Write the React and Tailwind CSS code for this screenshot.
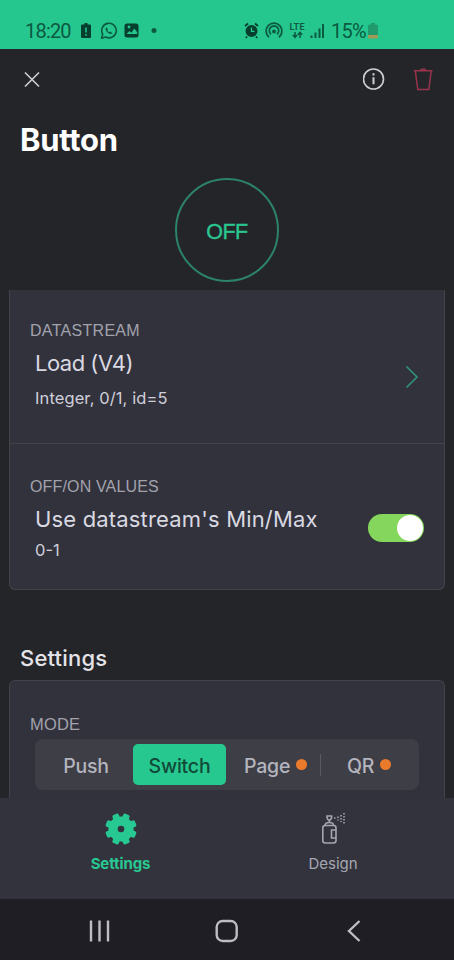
import { useState } from "react";

const modes = [
  { name: "Push", box: "w-[98px] pl-[4px] justify-center", pro: false },
  { name: "Switch", box: "w-[93px] justify-center", pro: false },
  { name: "Page", box: "w-[94px] pl-[18px]", pro: true },
  { name: "QR", box: "w-[98px] pl-[26px]", pro: true },
];

function StatusBar() {
  return (
    <div className="h-[49px] shrink-0 bg-[#25c78f] text-[#0b5a41] flex items-center pt-[12px] pl-[25px] font-[Roboto]">
      <span className="w-[56px] text-[20px] leading-6 tracking-[-0.8px]">18:20</span>
      <svg width="78" height="18" viewBox="0 0 78 18" fill="none">
        {/* battery */}
        <path d="M3.500 1h3v1.500H9a1 1 0 0 1 1 1V15a1 1 0 0 1-1 1H1a1 1 0 0 1-1-1V3.500a1 1 0 0 1 1-1h2.500z" fill="#063f2d" />
        <path d="M5 5.500v5M5 12v1.800" stroke="#25c78f" strokeWidth="1.500" />
        {/* whatsapp */}
        <path d="M20.600 16.200l1.100-4A7.300 7.300 0 1 1 24.600 15z" stroke="#0b5a41" strokeWidth="1.600" strokeLinejoin="round" />
        <path d="M25.300 5.300c-1.500 1.400-.5 3.400 1 4.900s3.600 2.500 5 .9l-1.900-1.500-1.100.7c-.9-.4-1.600-1.200-1.900-2l.6-1z" fill="#0b5a41" />
        {/* gallery */}
        <rect x="43.500" y="1.500" width="14" height="14" rx="2.500" fill="#063f2d" />
        <path d="M45.500 12l3-3 2 1.800 2.700-4.200 3 3.600V12z" fill="#25c78f" />
        <circle cx="48" cy="5" r="1.400" fill="#25c78f" />
        <circle cx="73" cy="8.500" r="2.500" fill="#0b5a41" />
      </svg>
      <div className="flex items-center ml-[85px]">
        <svg width="84" height="18" viewBox="0 0 84 18" fill="none">
          {/* alarm */}
          <circle cx="7.500" cy="9" r="6" fill="#063f2d" />
          <path d="M1 4l3-2.500M14 4l-3-2.500M3 14.500l-1.200 1.300M12 14.500l1.200 1.300" stroke="#063f2d" strokeWidth="1.800" />
          <path d="M7.500 5.500V9.300h3" stroke="#25c78f" strokeWidth="1.300" />
          {/* hotspot */}
          <path d="M25 15.200a7.900 7.900 0 1 1 10 0M27 12.300a4.700 4.700 0 1 1 6 0" stroke="#0b5a41" strokeWidth="1.800" />
          <circle cx="30" cy="9.500" r="1.900" fill="#0b5a41" />
          <path d="M51 10v5.200M48.800 13l2.200 2.400 2.200-2.400M56 16v-5.500M53.800 12.700l2.200-2.400 2.200 2.400" stroke="#0b5a41" strokeWidth="1.500" />
          <text x="45.500" y="8" fill="#0b5a41" fontFamily="Roboto" fontWeight="700" fontSize="9" textLength="15">LTE</text>
          <path d="M67.500 16v-2.500M71.500 16v-5.500M75.500 16V6.500M79 16V2" stroke="#0b5a41" strokeWidth="2" />
        </svg>
        <span className="text-[20px] leading-6 ml-[3px] w-[37px] tracking-[-0.8px]">15%</span>
        <svg width="10" height="16" viewBox="0 0 10 16">
          <path d="M3 0h4v1.500h1.500a1.500 1.500 0 0 1 1.500 1.500v9H0V3a1.500 1.500 0 0 1 1.500-1.500H3z" fill="#219a6e" />
          <path d="M0 12h10v2a1.500 1.500 0 0 1-1.500 1.500h-7A1.500 1.500 0 0 1 0 14z" fill="#a09a55" />
        </svg>
      </div>
    </div>
  );
}

function Header() {
  return (
    <div className="h-[241px] shrink-0 px-[20px]">
      {/* Close / info / delete */}
      <div className="h-[60px] flex items-center text-[#cfcfd4]">
        <svg className="ml-px" width="22" height="22" viewBox="0 0 22 22" fill="none" stroke="currentColor" strokeWidth="1.600">
          <path d="M4 4.500l14 14M18 4.500L4 18.500" />
        </svg>
        <svg className="ml-auto" width="24" height="24" viewBox="0 0 24 24" fill="none" stroke="currentColor">
          <circle cx="10.500" cy="12" r="10" strokeWidth="1.600" />
          <path d="M10.500 10.300v7M10.500 6.300v2.200" strokeWidth="2" />
        </svg>
        <svg className="ml-[27px]" width="20" height="24" viewBox="0 0 20 24" fill="none" stroke="#96344c" strokeWidth="1.500">
          <path d="M0 3.800h18.500M6.500 3.800c.3-2.400 5.200-2.400 5.500 0M1.300 3.800L3.800 22.500h11L17.200 3.800" />
        </svg>
      </div>
      <h1 className="h-[62px] leading-[62px] text-[31px] font-[Inter] font-bold tracking-[-0.3px] text-white">Button</h1>
      <div className="mx-auto mt-[7px] size-[104px] rounded-full border-2 border-[#2c8369] flex items-center justify-center text-[21.5px] tracking-[-0.5px] text-[#2bc48f] [-webkit-text-stroke:0.4px]">
        <span className="pt-[4px]">OFF</span>
      </div>
    </div>
  );
}

function DatastreamCard({ on, setOn }) {
  return (
    <div className="mx-[9px] h-[300px] shrink-0 bg-[#32323c] border border-t-0 border-[#42424a] rounded-b-[6px]">
      <div className="h-[154px] border-b border-[#42424a] flex items-start">
        <div className="pl-[20px] pt-[31px]">
          <p className="text-[16px] leading-5 tracking-[0.3px] text-[#a2a2ad]">DATASTREAM</p>
          <p className="pl-[5px] mt-[8px] text-[22px] leading-7 font-[Inter] tracking-[-0.5px] text-[#d9d9e2]">Load (V4)</p>
          <p className="pl-[5px] mt-[11px] text-[16.5px] leading-5 font-[Inter] tracking-[0.1px] text-[#cfcfda]">Integer, 0/1, id=5</p>
        </div>
        <svg className="ml-auto mr-[25px] mt-[75px]" width="14" height="24" viewBox="0 0 14 24" fill="none" stroke="#32907a" strokeWidth="1.700">
          <path d="M1.500 1.500L12 12 1.500 22.500" />
        </svg>
      </div>
      <div className="h-[145px] flex items-start">
        <div className="pl-[20px] pt-[33px]">
          <p className="text-[16px] leading-5 tracking-[0.15px] text-[#a2a2ad]">OFF/ON VALUES</p>
          <p className="pl-[5px] mt-[8px] text-[22px] leading-7 font-[Inter] tracking-[0.17px] text-[#d9d9e2]">Use datastream's Min/Max</p>
          <p className="pl-[5px] mt-[7px] text-[16.5px] leading-5 font-[Inter] text-[#cfcfda]">0-1</p>
        </div>
        <button
          onClick={() => setOn(!on)}
          className={`ml-auto mr-[20px] mt-[70px] w-[56px] h-[28px] rounded-full p-px flex ${on ? "bg-[#84d75c] justify-end" : "bg-[#55555f] justify-start"}`}
        >
          <span className="size-[26px] rounded-full bg-white" />
        </button>
      </div>
    </div>
  );
}

function ModeCard({ mode, setMode }) {
  return (
    <div className="mx-[9px] flex-1 min-h-0 bg-[#32323c] border border-b-0 border-[#42424a] rounded-t-[6px] px-[20px] pt-[33px]">
      <p className="text-[16.500px] leading-5 tracking-[0.2px] text-[#a2a2ad]">MODE</p>
      <div className="ml-[5px] mt-[5px] w-[384px] h-[51px] rounded-[8px] bg-[#3e3e46] flex items-center">
        {modes.map((m, i) => (
          <div key={m.name} className="flex items-center">
            {i === 3 && <span className="w-px h-[22px] bg-[#5a5a63]" />}
            <button
              onClick={() => setMode(m.name)}
              className={`${m.box} h-[41px] rounded-[5px] flex items-center text-[19.500px] font-[Inter] font-medium tracking-[-0.2px] pt-[4px] ${
                mode === m.name ? "bg-[#26c88f] text-[#114a38]" : "text-[#b4b4be]"
              }`}
            >
              {m.name}
              {m.pro && <span className="ml-[6px] mb-[4px] size-[11px] rounded-full bg-[#ea7a2c]" />}
            </button>
          </div>
        ))}
      </div>
    </div>
  );
}

function BottomTabs() {
  return (
    <div className="h-[101px] shrink-0 bg-[#33333d] flex">
      <div className="w-[241px] flex flex-col items-center pt-[15px] text-[#27c891]">
        <svg width="32" height="32" viewBox="-16 -16 32 32" fill="currentColor">
          {[22.5, 67.5, 112.5, 157.5].map((a) => (
            <rect key={a} x="-3.400" y="-15.800" width="6.800" height="31.600" rx="1.800" transform={`rotate(${a})`} />
          ))}
          <circle r="12.600" />
          <circle r="3.300" fill="#33333d" />
        </svg>
        <span className="mt-[9px] text-[15px] leading-5 font-[Inter] font-bold tracking-[-0.1px]">Settings</span>
      </div>
      <div className="w-[184px] flex flex-col items-center pt-[14px] text-[#a6a6b0]">
        <svg width="26" height="33" viewBox="0 0 26 33" fill="none" stroke="currentColor" strokeWidth="1.600">
          <rect x="2.800" y="13.500" width="13.200" height="17.500" rx="2.500" />
          <path d="M5 13.500c0-2 1.500-3 4.300-3s4.300 1 4.300 3M9.300 10.500V8M7 4h4.600v2L10.300 8h-2L7 6zM16 18h-4.500v8H16" />
          <path d="M14 6h1.500M18 4.500v4M21 3v7M24 1v11" strokeDasharray="1.600 1.400" />
        </svg>
        <span className="mt-[9px] text-[15px] leading-5 font-[Inter]">Design</span>
      </div>
    </div>
  );
}

function SystemNav() {
  return (
    <div className="h-[61px] shrink-0 bg-[#1f1e25] flex items-center pt-[2px] pl-[88px] text-[#bdbdc3]">
      <svg width="23" height="22" viewBox="0 0 23 22" stroke="currentColor" strokeWidth="2.400">
        <path d="M3 .5v21M11.500 .5v21M20 .5v21" />
      </svg>
      <svg className="ml-[104px]" width="24" height="24" viewBox="0 0 24 24" fill="none" stroke="currentColor" strokeWidth="2.400">
        <rect x="1.700" y="2" width="20" height="20" rx="6" />
      </svg>
      <svg className="ml-[108px]" width="14" height="22" viewBox="0 0 14 22" fill="none" stroke="currentColor" strokeWidth="2.400">
        <path d="M12.500 1L2 11l10.500 10" />
      </svg>
    </div>
  );
}

export default function App() {
  const [on, setOn] = useState(true);
  const [mode, setMode] = useState("Switch");

  return (
    <div className="w-[454px] h-[960px] overflow-hidden flex flex-col bg-[#242529] font-['Liberation_Sans',sans-serif]">
      <StatusBar />
      <Header />
      <DatastreamCard on={on} setOn={setOn} />
      <h2 className="h-[90px] shrink-0 pl-[20px] pt-[54px] text-[22px] leading-7 font-[Inter] font-medium tracking-[0.2px] text-[#e4e4e8]">Settings</h2>
      <ModeCard mode={mode} setMode={setMode} />
      <BottomTabs />
      <SystemNav />
    </div>
  );
}
